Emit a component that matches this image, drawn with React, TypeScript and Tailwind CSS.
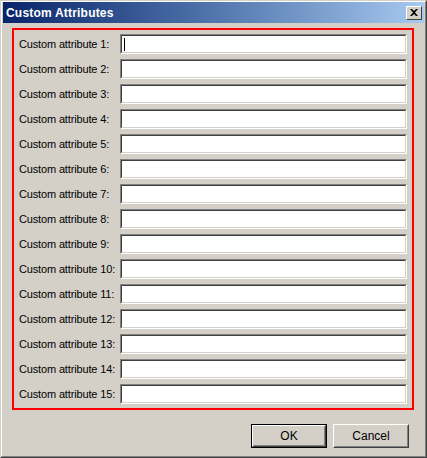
import React from 'react';

const font = { fontFamily: '"Liberation Sans", Arial, sans-serif' };

const Row: React.FC<{ n: number; focused?: boolean }> = ({ n, focused }) => (
  <div className="flex items-center h-[20px]">
    <label className="w-[101px] text-[11px] text-black leading-none whitespace-nowrap tracking-[-0.15px]">
      Custom attribute {n}:
    </label>
    <div className="flex-1 h-[20px] border border-t-[#808080] border-l-[#808080] border-r-white border-b-white">
      <div className="h-full border border-t-[#404040] border-l-[#404040] border-r-[#d4d0c8] border-b-[#d4d0c8] bg-white flex items-center">
        {focused && <div className="ml-[2px] w-px h-[13px] bg-black" />}
      </div>
    </div>
  </div>
);

const Button: React.FC<{ label: string; isDefault?: boolean }> = ({ label, isDefault }) => (
  <div className={`w-[76px] h-[24px] ${isDefault ? 'border border-black' : ''}`}>
    <div className="h-full border border-t-white border-l-white border-r-[#404040] border-b-[#404040]">
      <div className="h-full border border-t-[#d4d0c8] border-l-[#d4d0c8] border-r-[#808080] border-b-[#808080] flex items-center justify-center text-[12px] text-black">
        {label}
      </div>
    </div>
  </div>
);

export default function App() {
  const rows = Array.from({ length: 15 }, (_, i) => i + 1);
  return (
    <div style={font} className="w-[427px] h-[458px] bg-[#d4d0c8] overflow-hidden">
      <div className="w-full h-full border border-t-[#d4d0c8] border-l-[#d4d0c8] border-r-[#404040] border-b-[#404040]">
        <div className="w-full h-full border border-t-white border-l-white border-r-[#808080] border-b-[#808080] flex flex-col">
          {/* title bar */}
          <div className="h-[21px] mx-px flex items-center justify-between bg-gradient-to-r from-[#0a246a] to-[#a6caf0] pl-[3px] pr-[2px]">
            <span className="text-white font-bold text-[12px] tracking-[0.2px]">Custom Attributes</span>
            <div className="w-[16px] h-[14px] border border-t-white border-l-white border-r-[#404040] border-b-[#404040] bg-[#d4d0c8] flex items-center justify-center">
              <svg width="8" height="7" viewBox="0 0 8 7">
                <path d="M0 0h2l2 2 2-2h2L5 3.5 8 7H6L4 5 2 7H0l3-3.5z" fill="black" />
              </svg>
            </div>
          </div>

          {/* attributes group */}
          <div className="mt-[5px] ml-[10px] mr-[11px] border-2 border-[#ff0000] pt-[4px] pb-[4px] pl-[5px] pr-[5px] flex flex-col gap-[5px]">
            {rows.map((n) => (
              <Row key={n} n={n} focused={n === 1} />
            ))}
          </div>

          {/* buttons */}
          <div className="mt-[14px] flex justify-end gap-[6px] pr-[16px]">
            <Button label="OK" isDefault />
            <Button label="Cancel" />
          </div>
        </div>
      </div>
    </div>
  );
}
